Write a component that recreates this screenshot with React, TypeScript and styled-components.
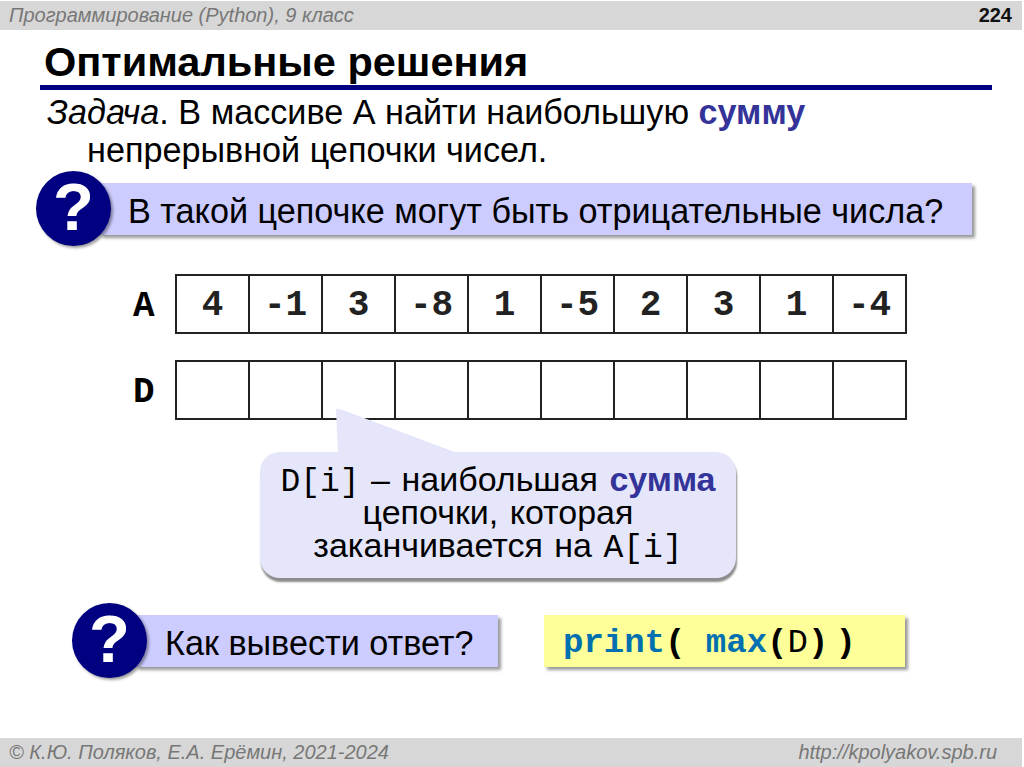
import styled, { createGlobalStyle } from "styled-components";

const GlobalStyle = createGlobalStyle`
	html, body {
		margin: 0;
		padding: 0;
		background: #fff;
		font-family: "Liberation Sans", Arial, sans-serif;
	}
`;

const Slide = styled.div`
	width: 1024px;
	height: 767px;
	overflow: hidden;
	display: flex;
	flex-direction: column;
	color: #000;
`;
const Bar = styled.div`
	height: 29px;
	flex: none;
	background: #d7d7d7;
	display: flex;
	align-items: center;
	justify-content: space-between;
	font-size: 20px;
	font-style: italic;
	color: #777;
`;
const TopBar = styled(Bar)`
	margin: 1px 2px 0 0;
	padding: 0 10px 0 9px;
`;
const BottomBar = styled(Bar)`
	margin: 59px 2px 0 0;
	padding: 0 25px 0 9px;
`;
const PageNo = styled.span`
	font-size: 20px;
	font-weight: 700;
	font-style: normal;
	color: #111;
`;
const Title = styled.h1`
	margin: 10px 32px 0 40px;
	padding: 0 0 1px 4px;
	height: 44px;
	box-sizing: content-box;
	border-bottom: 5px solid #000080;
	font-size: 41.5px;
	line-height: 44px;
	font-weight: 700;
	white-space: nowrap;
`;
const Task = styled.p`
	margin: 3px 0 0 47px;
	padding-left: 40px;
	text-indent: -40px;
	font-size: 34.2px;
	line-height: 38px;
	white-space: nowrap;
`;
const Accent = styled.b`
	color: #333399;
`;
const Question = styled.div<{ $indent: number; $width: number; $top: number }>`
	position: relative;
	flex: none;
	margin: ${(p) => p.$top}px 0 0 ${(p) => p.$indent}px;
	width: ${(p) => p.$width}px;
	height: 76px;
	display: flex;
	align-items: center;
`;
const Badge = styled.div`
	position: absolute;
	left: 0;
	top: 0;
	z-index: 1;
	width: 75px;
	height: 75px;
	border-radius: 50%;
	background: #000080;
	box-shadow: 2px 2px 3px rgba(0, 0, 0, 0.4);
	color: #fff;
	font-size: 67px;
	font-weight: 700;
	line-height: 72px;
	text-align: center;
`;
const QuestionText = styled.div<{ $pad: number }>`
	margin-left: 64px;
	flex: 1;
	height: 52px;
	padding-left: ${(p) => p.$pad}px;
	background: #ccccff;
	box-shadow: 3px 3px 3px rgba(0, 0, 0, 0.4);
	font-size: 34.2px;
	line-height: 56px;
	white-space: nowrap;
`;
const ArrayRow = styled.div<{ $top: number }>`
	margin: ${(p) => p.$top}px 0 0 133px;
	display: flex;
	align-items: center;
`;
const ArrayName = styled.div`
	width: 42px;
	padding-top: 4px;
	font-family: "Liberation Mono", monospace;
	font-size: 36px;
	font-weight: 700;
`;
const Cell = styled.div`
	width: 71px;
	height: 54px;
	padding-top: 2px;
	margin-right: -2px;
	border: 2px solid #222;
	flex: none;
	display: flex;
	align-items: center;
	justify-content: center;
	font-family: "Liberation Mono", monospace;
	font-size: 36px;
	font-weight: 700;
	color: #222;
	box-sizing: content-box;
`;
const Callout = styled.div`
	position: relative;
	flex: none;
	margin: 32px 0 0 260px;
	width: 476px;
	height: 126px;
	box-sizing: border-box;
	padding-top: 11px;
	background: #e6e6fa;
	border-radius: 20px;
	box-shadow: 1px 4px 2px rgba(0, 0, 0, 0.45);
	text-align: center;
	font-size: 34px;
	line-height: 33px;
	word-spacing: 2px;
	white-space: nowrap;
`;
const Tail = styled.svg`
	position: absolute;
	left: 76px;
	top: -44px;
`;
const CalloutLine = styled.div`
	position: relative;
	height: 33px;
`;
const Mono = styled.span`
	font-family: "Liberation Mono", monospace;
	font-size: 33px;
`;
const BottomRow = styled.div`
	flex: none;
	margin: 25px 0 0 72px;
	display: flex;
	align-items: center;
`;
const Code = styled.div`
	margin-left: 46px;
	width: 361px;
	height: 52px;
	box-sizing: border-box;
	padding-left: 19px;
	background: #ffff99;
	box-shadow: 3px 3px 3px rgba(0, 0, 0, 0.4);
	font-family: "Liberation Mono", monospace;
	font-size: 34px;
	font-weight: 700;
	line-height: 56px;
	white-space: pre;
`;
const Keyword = styled.span`
	color: #0070b0;
`;
const Plain = styled.span`
	font-weight: 400;
`;
const ThinGap = styled.span`
	font-size: 12px;
`;

const a = ["4", "-1", "3", "-8", "1", "-5", "2", "3", "1", "-4"];

const App = () => {
	return (
		<Slide>
			<GlobalStyle />
			<TopBar>
				<span>Программирование (Python), 9 класс</span>
				<PageNo>224</PageNo>
			</TopBar>
			<Title>Оптимальные решения</Title>
			<Task>
				<i>Задача</i>. В массиве А найти наибольшую <Accent>сумму</Accent>
				<br />
				непрерывной цепочки чисел.
			</Task>
			<Question $indent={36} $width={936} $top={2}>
				<Badge>?</Badge>
				<QuestionText $pad={28}>В такой цепочке могут быть отрицательные числа?</QuestionText>
			</Question>
			<ArrayRow $top={27}>
				<ArrayName>A</ArrayName>
				{a.map((v, i) => (
					<Cell key={i}>{v}</Cell>
				))}
			</ArrayRow>
			<ArrayRow $top={26}>
				<ArrayName>D</ArrayName>
				{a.map((_, i) => (
					<Cell key={i} />
				))}
			</ArrayRow>
			<Callout>
				<Tail width="130" height="46" viewBox="0 0 130 46">
					<path d="M2 46 L0 2 Q0 0 4 1 L124 46 Z" fill="#e6e6fa" />
				</Tail>
				<CalloutLine>
					<Mono>D[i]</Mono> – наибольшая <Accent>сумма</Accent>
				</CalloutLine>
				<CalloutLine>цепочки, которая</CalloutLine>
				<CalloutLine>
					заканчивается на <Mono>A[i]</Mono>
				</CalloutLine>
			</Callout>
			<BottomRow>
				<Question $indent={0} $width={426} $top={0}>
					<Badge>?</Badge>
					<QuestionText $pad={29}>Как вывести ответ?</QuestionText>
				</Question>
				<Code>
					<Keyword>print</Keyword>( <Keyword>max</Keyword>(<Plain>D</Plain>)<ThinGap> </ThinGap>)
				</Code>
			</BottomRow>
			<BottomBar>
				<span>© К.Ю. Поляков, Е.А. Ерёмин, 2021-2024</span>
				<span>http://kpolyakov.spb.ru</span>
			</BottomBar>
		</Slide>
	);
};

export default App;
